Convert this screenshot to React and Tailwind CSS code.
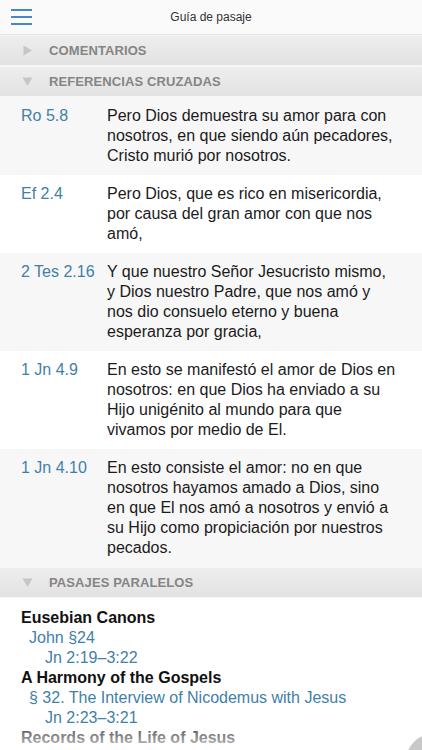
// App.jsx — Guía de pasaje (passage guide) screen

const crossRefs = [
  {
    ref: 'Ro 5.8',
    shade: true,
    lines: [
      'Pero Dios demuestra su amor para con',
      'nosotros, en que siendo aún pecadores,',
      'Cristo murió por nosotros.',
    ],
  },
  {
    ref: 'Ef 2.4',
    shade: false,
    lines: [
      'Pero Dios, que es rico en misericordia,',
      'por causa del gran amor con que nos',
      'amó,',
    ],
  },
  {
    ref: '2 Tes 2.16',
    shade: true,
    lines: [
      'Y que nuestro Señor Jesucristo mismo,',
      'y Dios nuestro Padre, que nos amó y',
      'nos dio consuelo eterno y buena',
      'esperanza por gracia,',
    ],
  },
  {
    ref: '1 Jn 4.9',
    shade: false,
    lines: [
      'En esto se manifestó el amor de Dios en',
      'nosotros: en que Dios ha enviado a su',
      'Hijo unigénito al mundo para que',
      'vivamos por medio de El.',
    ],
  },
  {
    ref: '1 Jn 4.10',
    shade: true,
    lines: [
      'En esto consiste el amor: no en que',
      'nosotros hayamos amado a Dios, sino',
      'en que El nos amó a nosotros y envió a',
      'su Hijo como propiciación por nuestros',
      'pecados.',
    ],
  },
];

// Small gray disclosure triangle
const Disclosure = ({ open }) => (
  <svg width="11" height="11" viewBox="0 0 11 11" className="shrink-0">
    {open ? (
      <polygon points="0.5,1.5 10.5,1.5 5.5,10" fill="#c6c6c6" />
    ) : (
      <polygon points="1.5,0.5 10,5.5 1.5,10.5" fill="#c6c6c6" />
    )}
  </svg>
);

const SectionHeader = ({ title, open }) => (
  <div className="h-[31px] flex items-center pl-[22px] bg-gradient-to-b from-[#eeeeee] to-[#e2e2e2] border-t border-[#f6f6f6] border-b border-[#d3d3d3]">
    <Disclosure open={open} />
    <span className="ml-[16px] text-[13px] font-bold text-[#858585] tracking-[0.1px]">
      {title}
    </span>
  </div>
);

const RefRow = ({ item }) => (
  <div className={`flex py-[9px] ${item.shade ? 'bg-[#f7f7f7]' : 'bg-white'}`}>
    <div className="w-[86px] ml-[21px] shrink-0 text-[16px] leading-[20px] text-[#3f80a8]">
      {item.ref}
    </div>
    <div className="w-[300px] text-[16px] leading-[20px] text-[#1b1b1b]">
      {item.lines.map((line) => (
        <span key={line} className="block whitespace-nowrap">
          {line}
        </span>
      ))}
    </div>
  </div>
);

export default function App() {
  return (
    <div
      className="relative w-[422px] h-[750px] overflow-hidden bg-white"
      style={{ fontFamily: '"Liberation Sans", Arial, sans-serif' }}
    >
      {/* Top bar */}
      <div className="h-[35px] flex items-center bg-[#fafafa] border-b border-[#e4e4e4] relative">
        <div className="ml-[11px] flex flex-col gap-[5px]">
          <div className="w-[21px] h-[2px] bg-[#4a86bf]" />
          <div className="w-[21px] h-[2px] bg-[#4a86bf]" />
          <div className="w-[21px] h-[2px] bg-[#4a86bf]" />
        </div>
        <div className="flex-1 text-center text-[12px] text-[#333333] -ml-[32px]">
          Guía de pasaje
        </div>
      </div>

      <SectionHeader title="COMENTARIOS" open={false} />
      <SectionHeader title="REFERENCIAS CRUZADAS" open />

      {crossRefs.map((item) => (
        <RefRow key={item.ref} item={item} />
      ))}

      <SectionHeader title="PASAJES PARALELOS" open />

      {/* Parallel passages */}
      <div className="pt-[10px] text-[16px] leading-[20px]">
        <div className="pl-[21px] font-bold text-[#111111]">Eusebian Canons</div>
        <div className="pl-[29px] text-[#3f80a8]">John §24</div>
        <div className="pl-[45px] text-[#3f80a8]">Jn 2:19–3:22</div>
        <div className="pl-[21px] font-bold text-[#111111]">A Harmony of the Gospels</div>
        <div className="pl-[29px] text-[#3f80a8]">§ 32. The Interview of Nicodemus with Jesus</div>
        <div className="pl-[45px] text-[#3f80a8]">Jn 2:23–3:21</div>
        <div className="pl-[21px] font-bold text-[#111111]">Records of the Life of Jesus</div>
      </div>

      {/* fade at the bottom edge */}
      <div className="absolute left-0 right-0 bottom-0 h-[22px] bg-gradient-to-b from-white/30 to-white/80" />

      {/* floating round button, mostly off-screen */}
      <div className="absolute left-[406px] top-[734px] w-[54px] h-[54px] rounded-full bg-[#c8c8c8]" />
    </div>
  );
}
